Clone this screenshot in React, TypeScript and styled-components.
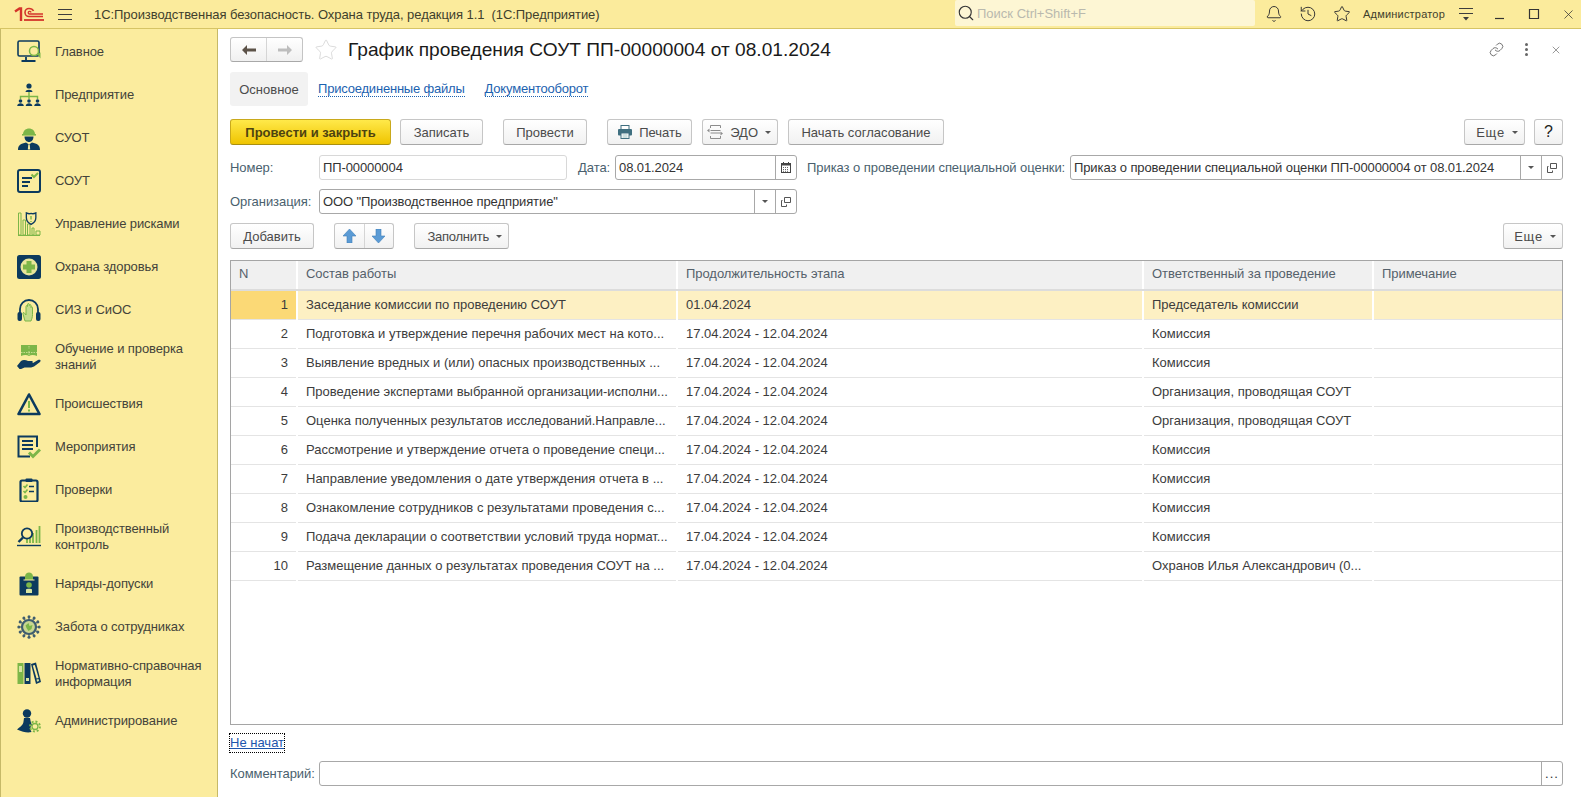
import React from "react";
import styled, { createGlobalStyle } from "styled-components";
import { Bell, History, Star, Link as LinkIcon, X, Search } from "lucide-react";

const NAVY = "#0c3a5e";
const GREEN = "#7cb648";

const GlobalStyle = createGlobalStyle`
  html, body, #root {
    margin: 0;
    height: 100%;
  }
  body {
    font-family: "Liberation Sans", Arial, sans-serif;
    font-size: 13px;
    color: #4b4b4b;
    background: #fff;
    overflow: hidden;
  }
  * { box-sizing: border-box; }
`;

const Page = styled.div`
  display: flex;
  flex-direction: column;
  height: 797px;
  width: 1581px;
  overflow: hidden;
`;

const TopBar = styled.header`
  display: flex;
  align-items: center;
  flex: 0 0 29px;
  height: 29px;
  padding-left: 14px;
  background: #fbeb9c;
  border-bottom: 1px solid #d6c465;
`;

const MenuLines = styled.div`
  width: 14px;
  height: 11px;
  margin-left: 14px;
  border-top: 1px solid #3d3d3d;
  border-bottom: 1px solid #3d3d3d;
  position: relative;
  &::after {
    content: "";
    position: absolute;
    left: 0;
    right: 0;
    top: 4px;
    border-top: 1px solid #3d3d3d;
  }
`;

const AppTitle = styled.div`
  flex: 1;
  margin-left: 22px;
  color: #3f3f2c;
  letter-spacing: -0.065px;
  white-space: pre;
`;

const SearchBox = styled.div`
  display: flex;
  align-items: center;
  gap: 2px;
  width: 300px;
  height: 26px;
  margin-top: -2px;
  padding-left: 2px;
  background: #fdf6d4;
  border-radius: 2px;
  color: #b9b9ae;
  svg { color: #333; }
`;

const TopSlot = styled.div<{ $ml?: number; $mr?: number }>`
  display: flex;
  align-items: center;
  justify-content: center;
  width: 34px;
  flex: none;
  margin-left: ${(p) => p.$ml ?? 0}px;
  margin-right: ${(p) => p.$mr ?? 0}px;
  color: #333;
`;

const UserName = styled.div`
  width: 82px;
  margin-left: 4px;
  font-size: 11px;
  letter-spacing: 0.2px;
  color: #3f3f2c;
  white-space: nowrap;
`;

const Body = styled.div`
  display: flex;
  flex: 1;
  min-height: 0;
`;

const Sidebar = styled.nav`
  flex: 0 0 218px;
  padding-top: 1px;
  background: #fbec9e;
  border-left: 1px solid #c6b968;
  border-right: 1px solid #c6b968;
`;

const NavItem = styled.div<{ $tall?: boolean }>`
  display: flex;
  align-items: center;
  gap: 14px;
  height: ${(p) => (p.$tall ? 51 : 43)}px;
  padding-left: 16px;
  color: #43433a;
  letter-spacing: -0.1px;
  line-height: 16px;
`;

const NavIcon = styled.svg`
  flex: none;
  width: 24px;
  height: 24px;
`;

const NavLabel = styled.span`
  width: 155px;
`;

const Main = styled.main`
  display: flex;
  flex-direction: column;
  flex: 1;
  min-width: 0;
  padding: 8px 18px 11px 12px;
`;

const TitleRow = styled.div`
  display: flex;
  align-items: center;
  height: 25px;
`;

const NavGroup = styled.div`
  display: flex;
  width: 73px;
  height: 25px;
  border: 1px solid #c4c4c4;
  border-bottom-color: #a8a8a8;
  border-radius: 3px;
  background: linear-gradient(#ffffff, #f0f0f0);
`;

const NavHalf = styled.div<{ $divider?: boolean }>`
  flex: 1;
  display: flex;
  align-items: center;
  justify-content: center;
  border-left: ${(p) => (p.$divider ? "1px solid #d5d5d5" : "none")};
`;

const TitleStar = styled.div`
  display: flex;
  margin-left: 11px;
  color: #d2d2d2;
`;

const Title = styled.h1`
  margin: 0 0 0 10px;
  font-size: 19.15px;
  font-weight: 400;
  color: #1a1a1a;
  white-space: nowrap;
`;

const TitleTools = styled.div`
  display: flex;
  margin-left: auto;
  margin-right: -8px;
  color: #555;
`;

const ToolSlot = styled.div`
  display: flex;
  align-items: center;
  justify-content: center;
  width: 30px;
`;

const Dots = styled.div`
  display: flex;
  flex-direction: column;
  gap: 2px;
  span {
    width: 3px;
    height: 3px;
    background: #666;
    border-radius: 50%;
  }
`;

const TabsRow = styled.div`
  display: flex;
  align-items: center;
  height: 34px;
  margin-top: 10px;
`;

const ActiveTab = styled.div`
  display: flex;
  align-items: center;
  justify-content: center;
  width: 78px;
  height: 34px;
  background: #f2f2f2;
  border-radius: 3px;
`;

const TabLink = styled.a<{ $ml: number }>`
  margin-left: ${(p) => p.$ml}px;
  color: #1c62b0;
  letter-spacing: -0.2px;
  border-bottom: 1px dotted #1c62b0;
  line-height: 14px;
`;

const Bar = styled.div<{ $mt: number }>`
  display: flex;
  align-items: center;
  height: 26px;
  margin-top: ${(p) => p.$mt}px;
`;

const Btn = styled.button<{ $w: number; $ml?: number; $primary?: boolean; $menu?: boolean }>`
  display: flex;
  align-items: center;
  justify-content: ${(p) => (p.$menu ? "flex-end" : "center")};
  gap: ${(p) => (p.$menu ? 7 : 6)}px;
  flex: none;
  width: ${(p) => p.$w}px;
  height: 26px;
  margin-left: ${(p) => p.$ml ?? 0}px;
  padding: 0 ${(p) => (p.$menu ? 6 : 0)}px 0 0;
  font: ${(p) => (p.$primary ? "700" : "400")} 13px "Liberation Sans", Arial, sans-serif;
  color: ${(p) => (p.$primary ? "#4e4310" : "#4b4b4b")};
  background: ${(p) =>
    p.$primary ? "linear-gradient(#ffe94a, #efc400)" : "linear-gradient(#ffffff, #f1f1f1)"};
  border: 1px solid ${(p) => (p.$primary ? "#c9a91c" : "#c6c6c6")};
  border-bottom-color: ${(p) => (p.$primary ? "#a98f10" : "#a8a8a8")};
  border-radius: 3px;
`;

const HelpBtn = styled(Btn)`
  font-size: 16px;
  color: #222;
`;

const MoreLabel = styled.span`
  letter-spacing: 0.8px;
`;

const FillLabel = styled.span`
  letter-spacing: -0.25px;
`;

const Caret = styled.span`
  width: 0;
  height: 0;
  border-left: 3px solid transparent;
  border-right: 3px solid transparent;
  border-top: 3px solid #555;
`;

const ArrowGroup = styled.div`
  display: flex;
  flex: none;
  width: 60px;
  height: 26px;
  margin-left: 20px;
  border: 1px solid #c6c6c6;
  border-bottom-color: #a8a8a8;
  border-radius: 3px;
  background: linear-gradient(#ffffff, #f1f1f1);
`;

const FormRow = styled.div<{ $mt: number }>`
  display: flex;
  align-items: center;
  height: 25px;
  margin-top: ${(p) => p.$mt}px;
`;

const Label = styled.label<{ $w: number; $ml?: number }>`
  flex: none;
  width: ${(p) => p.$w}px;
  margin-left: ${(p) => p.$ml ?? 0}px;
  color: #4a5f6e;
  letter-spacing: -0.06px;
  white-space: nowrap;
`;

const Field = styled.div<{ $w?: number; $soft?: boolean }>`
  display: flex;
  align-items: stretch;
  height: 25px;
  ${(p) => (p.$w ? `flex: 0 0 ${p.$w}px;` : "flex: 1;")}
  min-width: 0;
  border: 1px solid ${(p) => (p.$soft ? "#d8d8d8" : "#a8a8a8")};
  border-radius: 3px;
  background: #fff;
`;

const FieldValue = styled.div`
  flex: 1;
  min-width: 0;
  padding-left: 3px;
  line-height: 23px;
  color: #333;
  letter-spacing: -0.1px;
  white-space: nowrap;
  overflow: hidden;
`;

const FieldBtn = styled.div`
  display: flex;
  align-items: center;
  justify-content: center;
  flex: 0 0 21px;
  border-left: 1px solid #a8a8a8;
  color: #555;
`;

const Spacer = styled.div`
  flex: 1;
`;

const TableBox = styled.div`
  flex: 1;
  min-height: 0;
  margin-top: 11px;
  border: 1px solid #a5a5a5;
  overflow: hidden;
`;

const Table = styled.table`
  width: 100%;
  table-layout: fixed;
  border-collapse: collapse;
`;

const Th = styled.th`
  height: 29px;
  padding: 0 7px 4px 8px;
  font-weight: 400;
  text-align: left;
  color: #55616b;
  letter-spacing: -0.05px;
  background: #f0f0f0;
  border-right: 2px solid #fff;
  border-bottom: 2px solid #dcdcdc;
  &:last-child { border-right: 0; }
`;

const Tr = styled.tr<{ $current?: boolean }>`
  background: ${(p) => (p.$current ? "#fdf0c3" : "#fff")};
`;

const Td = styled.td`
  height: 29px;
  padding: 0 7px 0 8px;
  color: #3c3c3c;
  white-space: nowrap;
  overflow: hidden;
  border-bottom: 1px solid #e4e4e4;
  border-right: 2px solid #fff;
  &:last-child { border-right: 0; }
`;

const NumTd = styled(Td)<{ $current?: boolean }>`
  padding-right: 8px;
  text-align: right;
  background-color: ${(p) => (p.$current ? "#fbd976" : "transparent")};
  background-image: ${(p) =>
    p.$current ? "radial-gradient(#fde39a 0.5px, transparent 0.6px)" : "none"};
  background-size: 2px 2px;
`;

const StatusRow = styled.div`
  display: flex;
  height: 19px;
  margin-top: 8px;
`;

const StatusLink = styled.a`
  display: block;
  height: 18px;
  margin-top: 1px;
  color: #1c55ad;
  text-decoration: underline;
  line-height: 18px;
  outline: 1px dotted #000;
`;

const MoreDots = styled.span`
  color: #333;
  line-height: 18px;
  letter-spacing: 1px;
`;

const Icon = styled.svg`
  display: block;
  flex: none;
`;

type NavEntry = { label: string; tall?: boolean; art: React.ReactNode };

const navEntries: NavEntry[] = [
  {
    label: "Главное",
    art: (
      <>
        <rect x="1" y="1" width="21" height="15" rx="1.5" fill="none" stroke={NAVY} strokeWidth="1.6" />
        <path d="M9 17v3M4.5 21h14" stroke={NAVY} strokeWidth="1.8" />
        <circle cx="17" cy="11" r="4.5" fill="#fbec9e" stroke={GREEN} strokeWidth="1.5" />
        <path d="M20 14l3.5 4.5v-6z" fill={GREEN} />
      </>
    ),
  },
  {
    label: "Предприятие",
    art: (
      <>
        <circle cx="12" cy="3" r="2.6" fill={NAVY} />
        <path d="M8.5 9c0-3 7-3 7 0z" fill={NAVY} />
        <path d="M12 9v5M3.5 16v-2.5h17V16M12 14v2" stroke={GREEN} strokeWidth="1.4" fill="none" />
        {[3.5, 12, 20.5].map((x) => (
          <g key={x} fill={NAVY}>
            <circle cx={x} cy="18" r="1.8" />
            <path d={`M${x - 3.3} 23c0-3.6 6.6-3.6 6.6 0z`} />
          </g>
        ))}
      </>
    ),
  },
  {
    label: "СУОТ",
    art: (
      <>
        <path d="M6 8.500c0-8 12-8 12 0z" fill={GREEN} />
        <rect x="5" y="8" width="14" height="1.600" fill={GREEN} />
        <path d="M7.500 10.500h9c0 3.400-2 5.500-4.500 5.500s-4.500-2.100-4.500-5.500z" fill={NAVY} />
        <path d="M1 24c0-5 3-6.500 8-7.500l3 2 3-2c5 1 8 2.500 8 7.500z" fill={NAVY} />
        <path d="M11.300 18.500h1.400l.5 5h-2.400z" fill="#fbec9e" />
      </>
    ),
  },
  {
    label: "СОУТ",
    art: (
      <>
        <rect x="1" y="1" width="22" height="22" rx="2" fill="none" stroke={NAVY} strokeWidth="2" />
        <path d="M5 9h10M5 13h8M5 17h6" stroke={NAVY} strokeWidth="1.800" />
        <path d="M14.500 5.500l2.500 2.500 4-4" fill="none" stroke={GREEN} strokeWidth="2" />
      </>
    ),
  },
  {
    label: "Управление рисками",
    art: (
      <>
        <path
          d="M1.500 1h2.500v22H1.500zM6 8h2.500v15H6zM10.500 12h2.500v11h-2.500zM15 16h2v7h-2zM19 19h4v4h-4z"
          fill="none"
          stroke={GREEN}
          strokeWidth="1"
        />
        <path d="M1 23.500h22" stroke={GREEN} strokeWidth="1" />
        <path d="M13 1c2 1 3.500 1 5 .5 1.500.5 3 .5 5-.5v5c0 4-3 6-5 7-2-1-5-3-5-7z" transform="translate(-3 0) scale(.95)" fill="#fbec9e" stroke={NAVY} strokeWidth="1.400" />
        <path d="M14 4v3.500M14 9v1" stroke={GREEN} strokeWidth="1.400" />
      </>
    ),
  },
  {
    label: "Охрана здоровья",
    art: (
      <>
        <rect y="0" width="24" height="24" rx="2.500" fill={NAVY} />
        <circle cx="12" cy="12" r="8.500" fill="#e8e69a" />
        <path d="M9.500 6h5v3.500H18v5h-3.500V18h-5v-3.500H6v-5h3.500z" fill={GREEN} />
      </>
    ),
  },
  {
    label: "СИЗ и СиОС",
    art: (
      <>
        <path d="M3 15v-4a9 9 0 0 1 18 0v4" fill="none" stroke={NAVY} strokeWidth="1.800" />
        <rect x="0.500" y="14" width="4.500" height="9" rx="2" fill={NAVY} />
        <rect x="19" y="14" width="4.500" height="9" rx="2" fill={NAVY} />
        <path
          d="M8 23l-2-7c-.5-1.500 1-2 1.600-.8L9 17V8.500c0-1.200 1.500-1.200 1.500 0V6.500c0-1.200 1.800-1.200 1.800 0v1c0-1.200 1.700-1.200 1.700 0v2c0-1 1.500-1 1.500 0v7c0 3-1 5-1.500 6.500z"
          fill="#c4db8a"
          stroke={GREEN}
          strokeWidth="1"
        />
      </>
    ),
  },
  {
    label: "Обучение и проверка знаний",
    tall: true,
    art: (
      <>
        <path d="M4 0h16v11c-3-1.400-6-1.400-8 0-2-1.400-5-1.400-8 0z" fill={GREEN} />
        <path d="M12 1v3M12 6v4M4 7.500h16" stroke="#d8e5a0" strokeWidth=".8" strokeDasharray="1.500 1" />
        <path d="M0 21l4-5c2-1.500 5-1 7 0h4c1.500.5 1 2-.5 2H11h5l5-3c2-1 3.500.5 2 2l-6 4.500c-3 1.500-7 1-9.500 1L3 24.500z" fill={NAVY} />
      </>
    ),
  },
  {
    label: "Происшествия",
    art: (
      <>
        <path d="M12 2.500L22.500 22h-21z" fill="none" stroke={NAVY} strokeWidth="2.600" strokeLinejoin="round" />
        <path d="M12 9v7M12 17.500v2" stroke={GREEN} strokeWidth="2" />
      </>
    ),
  },
  {
    label: "Мероприятия",
    art: (
      <>
        <path d="M20 12V1.500H1.500v20H13" fill="none" stroke={NAVY} strokeWidth="2" />
        <path d="M5 6h11M5 10h11M5 14h11" stroke={NAVY} strokeWidth="2" />
        <path d="M12 17.500l4 4 7-7" fill="none" stroke={GREEN} strokeWidth="3" />
      </>
    ),
  },
  {
    label: "Проверки",
    art: (
      <>
        <rect x="3.500" y="2.500" width="17" height="21" rx="1.500" fill="none" stroke={NAVY} strokeWidth="2.200" />
        <rect x="8.500" y="0.500" width="7" height="3.500" rx="1" fill={NAVY} />
        <path d="M6.500 8l1.500 1.500 2.500-3M6.500 13l1.500 1.500 2.500-3" fill="none" stroke={GREEN} strokeWidth="1.600" />
        <path d="M12 8.500h5M12 13.500h5" stroke={NAVY} strokeWidth="1.400" />
        <circle cx="8.500" cy="19" r="2" fill={GREEN} />
      </>
    ),
  },
  {
    label: "Производственный контроль",
    tall: true,
    art: (
      <>
        <path d="M10 18v-5M13 18v-7M16 18V8M19.500 18V5M22.500 18V1" stroke={GREEN} strokeWidth="1.800" />
        <circle cx="10" cy="8.500" r="5.200" fill="#fbec9e" stroke={NAVY} strokeWidth="1.800" />
        <path d="M6 12.500l-4.500 4.500" stroke={NAVY} strokeWidth="2.400" />
        <path d="M0 20.500h24" stroke={NAVY} strokeWidth="1.400" />
      </>
    ),
  },
  {
    label: "Наряды-допуски",
    art: (
      <>
        <rect x="2.500" y="4.500" width="19" height="19" rx="1" fill={NAVY} />
        <path d="M8 4.500c0-5.500 8-5.500 8 0v3.500H8z" fill={GREEN} />
        <path d="M6.500 8h11" stroke="#fbec9e" strokeWidth="1" />
        <circle cx="12" cy="13" r="2.800" fill={GREEN} />
        <path d="M9 21v-3.500c0-1 6-1 6 0V21z" fill="#d8e5a0" />
      </>
    ),
  },
  {
    label: "Забота о сотрудниках",
    art: (
      <>
        <circle cx="12" cy="12" r="7" fill="#c9d690" stroke="#3f5d6e" strokeWidth="2.200" />
        {[0, 30, 60, 90, 120, 150, 180, 210, 240, 270, 300, 330].map((a) => (
          <g key={a} transform={`rotate(${a} 12 12)`}>
            <path d="M12 5v-2" stroke="#3f5d6e" strokeWidth="1.200" />
            <circle cx="12" cy="1.800" r="1.500" fill="#3f5d6e" />
          </g>
        ))}
        <path d="M8.500 10.500l3-2.500 1 3 3-1-1 4-3 2-2-3z" fill={GREEN} />
      </>
    ),
  },
  {
    label: "Нормативно-справочная информация",
    tall: true,
    art: (
      <>
        <rect x="0.500" y="1" width="6" height="21" fill={GREEN} />
        <rect x="2" y="4" width="3" height="6" fill="#d8e5a0" />
        <rect x="7.500" y="1" width="6" height="21" fill={NAVY} />
        <rect x="9" y="16" width="3" height="3" fill="#d8e5a0" />
        <path d="M14 2l5-1.500 5 19.500-5 2z" fill={NAVY} />
        <path d="M19.500 17.500l2-.6.6 2.200-2 .6z" fill="#d8e5a0" />
        <path d="M15.800 3.500l2-.6 3.800 13-2 .6z" fill="#fbec9e" />
      </>
    ),
  },
  {
    label: "Администрирование",
    art: (
      <>
        <circle cx="10" cy="4.500" r="4.200" fill={NAVY} />
        <path d="M7 9h6c.5 3 1 5 2 7-2 1.500-2 4-.5 7-4 1-8.500 0-14.500-2.500 3-2.500 6.500-5 6.500-8z" fill={NAVY} />
        <g fill="#fbec9e" stroke={GREEN} strokeWidth="1.300">
          <circle cx="18" cy="17.500" r="3" />
          <circle cx="18" cy="17.500" r="5" fill="none" strokeDasharray="2 1.900" strokeWidth="1.800" />
        </g>
      </>
    ),
  },
];

type RowData = { n: number; work: string; period: string; owner: string };

const PERIOD = "17.04.2024 - 12.04.2024";

const rows: RowData[] = [
  { n: 1, work: "Заседание комиссии по проведению СОУТ", period: "01.04.2024", owner: "Председатель комиссии" },
  { n: 2, work: "Подготовка и утверждение перечня рабочих мест на кото...", period: PERIOD, owner: "Комиссия" },
  { n: 3, work: "Выявление вредных и (или) опасных производственных ...", period: PERIOD, owner: "Комиссия" },
  { n: 4, work: "Проведение экспертами выбранной организации-исполни...", period: PERIOD, owner: "Организация, проводящая СОУТ" },
  { n: 5, work: "Оценка полученных результатов исследований.Направле...", period: PERIOD, owner: "Организация, проводящая СОУТ" },
  { n: 6, work: "Рассмотрение и утверждение отчета о проведение специ...", period: PERIOD, owner: "Комиссия" },
  { n: 7, work: "Направление уведомления о дате утверждения отчета в ...", period: PERIOD, owner: "Комиссия" },
  { n: 8, work: "Ознакомление сотрудников с результатами проведения с...", period: PERIOD, owner: "Комиссия" },
  { n: 9, work: "Подача декларации о соответствии условий труда нормат...", period: PERIOD, owner: "Комиссия" },
  { n: 10, work: "Размещение данных о результатах проведения СОУТ на ...", period: PERIOD, owner: "Охранов Илья Александрович (0..." },
];

const Logo = () => (
  <Icon width="30" height="15" viewBox="0 0 30 15">
    <path d="M1 4.500l4.500-3h1.500v12.500" fill="none" stroke="#d4352b" strokeWidth="2.400" />
    <path d="M29 9.500H15a4 4 0 0 1 0-8c2.500 0 3.800 1 4.500 2.500" fill="none" stroke="#d4352b" strokeWidth="1.600" />
    <path d="M29 7H15.500a1.300 1.300 0 0 1 0-2.600c1 0 1.400.4 1.700.9" fill="none" stroke="#d4352b" strokeWidth="1.300" />
    <path d="M10 13h20" stroke="#d4352b" strokeWidth="1.800" />
  </Icon>
);

const Arrow = ({ dir, color }: { dir: "left" | "right"; color: string }) => (
  <Icon width="14" height="10" viewBox="0 0 14 10">
    <path
      d={dir === "left" ? "M0 5l5-5v3.500h9v3H5V10z" : "M14 5L9 0v3.500H0v3h9V10z"}
      fill={color}
    />
  </Icon>
);

const BlockArrow = ({ down }: { down?: boolean }) => (
  <Icon width="13" height="14" viewBox="0 0 13 14">
    <path
      d={down ? "M4 0h5v7h4l-6.500 7L0 7h4z" : "M4 14h5V7h4L6.500 0 0 7h4z"}
      fill="#5b9bd5"
      stroke="#3f7fb8"
      strokeWidth=".6"
    />
  </Icon>
);

const PrinterIcon = () => (
  <Icon width="16" height="14" viewBox="0 0 15 14">
    <rect x="3.500" y="0.500" width="8" height="4" fill="#fff" stroke="#3f6f80" />
    <rect x="0.500" y="4" width="14" height="6.500" rx="1" fill="#3f6f80" />
    <rect x="3.500" y="8" width="8" height="5.500" fill="#fff" stroke="#3f6f80" />
    <path d="M5 10h5M5 12h5" stroke="#7aa" strokeWidth=".7" />
  </Icon>
);

const EdoIcon = () => (
  <Icon width="16" height="14" viewBox="0 0 16 14" fill="none" stroke="#8c8c8c">
    <path d="M3.500 3V.5h10V3M3.500 5.500h10M3.500 8h10M3.500 11v2.500h10V11" />
    <path d="M0 5.500l2.500-2v4zM16 8.500l-2.500-2v4z" fill="#8c8c8c" stroke="none" />
  </Icon>
);

const CalendarIcon = () => (
  <Icon width="10" height="11" viewBox="0 0 10 11">
    <path d="M2 0h1v2H2zM7 0h1v2H7z" fill="#444" />
    <rect x="0.500" y="1.500" width="9" height="9" fill="#fff" stroke="#444" />
    <rect x="0.500" y="1.500" width="9" height="2" fill="#444" />
    <path d="M2 5.500h6M2 7.500h6M2 9.300h6" stroke="#666" strokeDasharray="1 1" />
  </Icon>
);

const OpenIcon = () => (
  <Icon width="10" height="10" viewBox="0 0 10 10" fill="none" stroke="#555">
    <path d="M3.500 .5h6v5h-6z" />
    <path d="M1.500 3.500h-1v6h5V7.500" />
  </Icon>
);

const UserMenuIcon = () => (
  <Icon width="14" height="13" viewBox="0 0 14 13">
    <path d="M0 .5h14M0 5.500h14" stroke="#3d3d3d" />
    <path d="M4 9h6l-3 3.500z" fill="#3d3d3d" />
  </Icon>
);

const WinMin = () => (
  <Icon width="12" height="12" viewBox="0 0 12 12">
    <path d="M1 10.500h9" stroke="#333" strokeWidth="1.200" />
  </Icon>
);

const WinMax = () => (
  <Icon width="12" height="12" viewBox="0 0 12 12" fill="none">
    <path d="M1.500 1.500h9v9h-9z" stroke="#333" strokeWidth="1.200" />
  </Icon>
);

const App = () => {
  return (
    <Page>
      <GlobalStyle />
      <TopBar>
        <Logo />
        <MenuLines />
        <AppTitle>1С:Производственная безопасность. Охрана труда, редакция 1.1  (1С:Предприятие)</AppTitle>
        <SearchBox>
          <Search size={18} strokeWidth={1.5} />
          Поиск Ctrl+Shift+F
        </SearchBox>
        <TopSlot $ml={2}><Bell size={18} strokeWidth={1.3} /></TopSlot>
        <TopSlot><History size={18} strokeWidth={1.3} /></TopSlot>
        <TopSlot><Star size={18} strokeWidth={1.3} /></TopSlot>
        <UserName>Администратор</UserName>
        <TopSlot $ml={4}><UserMenuIcon /></TopSlot>
        <TopSlot><WinMin /></TopSlot>
        <TopSlot><WinMax /></TopSlot>
        <TopSlot $mr={-4}><X size={15} strokeWidth={1.2} /></TopSlot>
      </TopBar>
      <Body>
        <Sidebar>
          {navEntries.map((item) => (
            <NavItem key={item.label} $tall={item.tall}>
              <NavIcon viewBox="0 0 24 24">{item.art}</NavIcon>
              <NavLabel>{item.label}</NavLabel>
            </NavItem>
          ))}
        </Sidebar>
        <Main>
          <TitleRow>
            <NavGroup>
              <NavHalf><Arrow dir="left" color="#5c5248" /></NavHalf>
              <NavHalf $divider><Arrow dir="right" color="#bdbdbd" /></NavHalf>
            </NavGroup>
            <TitleStar><Star size={24} strokeWidth={0.8} /></TitleStar>
            <Title>График проведения СОУТ ПП-00000004 от 08.01.2024</Title>
            <TitleTools>
              <ToolSlot><LinkIcon size={15} strokeWidth={1.3} /></ToolSlot>
              <ToolSlot><Dots><span /><span /><span /></Dots></ToolSlot>
              <ToolSlot><X size={12} strokeWidth={1.2} /></ToolSlot>
            </TitleTools>
          </TitleRow>

          <TabsRow>
            <ActiveTab>Основное</ActiveTab>
            <TabLink $ml={10}>Присоединенные файлы</TabLink>
            <TabLink $ml={20}>Документооборот</TabLink>
          </TabsRow>

          <Bar $mt={13}>
            <Btn $w={161} $primary>Провести и закрыть</Btn>
            <Btn $w={83} $ml={9}>Записать</Btn>
            <Btn $w={84} $ml={20}>Провести</Btn>
            <Btn $w={85} $ml={20}><PrinterIcon />Печать</Btn>
            <Btn $w={76} $ml={10} $menu><EdoIcon />ЭДО<Caret /></Btn>
            <Btn $w={156} $ml={10}>Начать согласование</Btn>
            <Spacer />
            <Btn $w={61} $menu><MoreLabel>Еще</MoreLabel><Caret /></Btn>
            <HelpBtn $w={29} $ml={9}>?</HelpBtn>
          </Bar>

          <FormRow $mt={10}>
            <Label $w={89}>Номер:</Label>
            <Field $w={248} $soft><FieldValue>ПП-00000004</FieldValue></Field>
            <Label $w={37} $ml={11}>Дата:</Label>
            <Field $w={182}>
              <FieldValue>08.01.2024</FieldValue>
              <FieldBtn><CalendarIcon /></FieldBtn>
            </Field>
            <Label $w={263} $ml={10}>Приказ о проведении специальной оценки:</Label>
            <Field>
              <FieldValue>Приказ о проведении специальной оценки ПП-00000004 от 08.01.2024</FieldValue>
              <FieldBtn><Caret /></FieldBtn>
              <FieldBtn><OpenIcon /></FieldBtn>
            </Field>
          </FormRow>

          <FormRow $mt={9}>
            <Label $w={89}>Организация:</Label>
            <Field $w={478}>
              <FieldValue>ООО "Производственное предприятие"</FieldValue>
              <FieldBtn><Caret /></FieldBtn>
              <FieldBtn><OpenIcon /></FieldBtn>
            </Field>
          </FormRow>

          <Bar $mt={9}>
            <Btn $w={84}>Добавить</Btn>
            <ArrowGroup>
              <NavHalf><BlockArrow /></NavHalf>
              <NavHalf $divider><BlockArrow down /></NavHalf>
            </ArrowGroup>
            <Btn $w={95} $ml={20} $menu><FillLabel>Заполнить</FillLabel><Caret /></Btn>
            <Spacer />
            <Btn $w={60} $menu><MoreLabel>Еще</MoreLabel><Caret /></Btn>
          </Bar>

          <TableBox>
            <Table>
              <colgroup>
                <col width="66" />
                <col width="380" />
                <col width="466" />
                <col width="230" />
                <col />
              </colgroup>
              <thead>
                <tr>
                  <Th>N</Th>
                  <Th>Состав работы</Th>
                  <Th>Продолжительность этапа</Th>
                  <Th>Ответственный за проведение</Th>
                  <Th>Примечание</Th>
                </tr>
              </thead>
              <tbody>
                {rows.map((row) => (
                  <Tr key={row.n} $current={row.n === 1}>
                    <NumTd $current={row.n === 1}>{row.n}</NumTd>
                    <Td>{row.work}</Td>
                    <Td>{row.period}</Td>
                    <Td>{row.owner}</Td>
                    <Td />
                  </Tr>
                ))}
              </tbody>
            </Table>
          </TableBox>

          <StatusRow><StatusLink>Не начат</StatusLink></StatusRow>

          <FormRow $mt={9}>
            <Label $w={89}>Комментарий:</Label>
            <Field>
              <FieldValue />
              <FieldBtn><MoreDots>...</MoreDots></FieldBtn>
            </Field>
          </FormRow>
        </Main>
      </Body>
    </Page>
  );
};

export default App;
